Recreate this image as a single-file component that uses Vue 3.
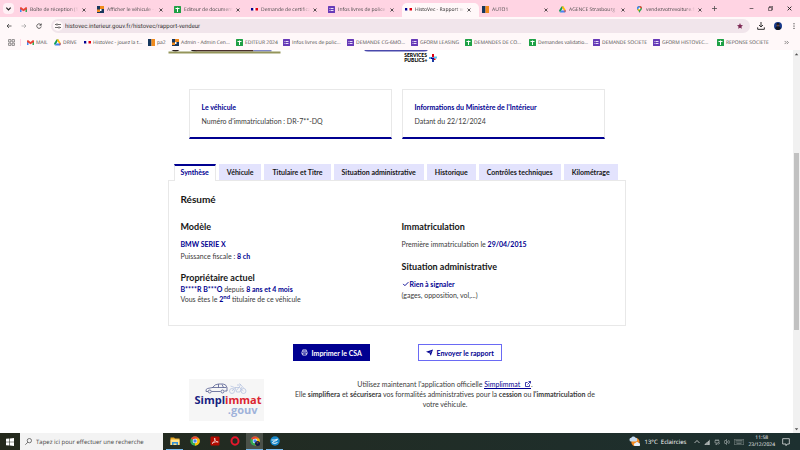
<template>
  <div class="screen">
    <!-- shared icons -->
    <svg class="defs" aria-hidden="true">
      <symbol id="i-gmail" viewBox="0 0 14 14">
        <path d="M0 3v9h3V6z" fill="#4285f4" />
        <path d="M14 3v9h-3V6z" fill="#34a853" />
        <path d="M0 3.500 2 2l5 4 5-4 2 1.500V6L7 10.500 0 6z" fill="#ea4335" />
      </symbol>
      <symbol id="i-drive" viewBox="0 0 14 14">
        <path d="M5 1h4L4.500 9 2 13 0 9z" fill="#0f9d58" />
        <path d="M5 1h4l5 8h-4z" fill="#ffba00" />
        <path d="M4.500 9H14l-2 4H2z" fill="#4285f4" />
        <path d="M10 9h4l-2 4z" fill="#ea4335" />
      </symbol>
      <symbol id="i-flag" viewBox="0 0 14 14">
        <path d="M0 4h5v5H0z" fill="#000091" />
        <path d="M5 4h4v5H5z" fill="#fff" />
        <path d="M9 4h5v5H9z" fill="#e1000f" />
      </symbol>
      <symbol id="i-auto" viewBox="0 0 14 14">
        <path d="M0 0h7v14H0z" fill="#17375e" />
        <path d="M7 0h7v14H7z" fill="#f08a1d" />
      </symbol>
      <symbol id="i-admin" viewBox="0 0 14 14">
        <path d="M0 0h14v14H0z" fill="#17375e" />
        <path d="M6 0h8v6H6zM0 7h6v5H0z" fill="#f08a1d" />
        <path d="M6 6h3v4H6z" fill="#fff" />
      </symbol>
      <symbol id="i-sheet" viewBox="0 0 14 14">
        <rect width="14" height="14" rx="1" fill="#1fa045" />
        <path d="M3 5h8M7 3v9" stroke="#fff" stroke-width="2" />
      </symbol>
      <symbol id="i-form" viewBox="0 0 14 14">
        <rect width="14" height="14" rx="1" fill="#673ab7" />
        <path d="M3 5h8M3 9h8" stroke="#e9e0f7" stroke-width="2" />
        <path d="M5 3v8" stroke="#673ab7" />
      </symbol>
      <symbol id="i-maps" viewBox="0 0 14 14">
        <path d="M7 14C6 9 2 8.500 2 5a5 5 0 0 1 10 0c0 3.500-4 4-5 9z" fill="#34a853" />
        <path d="M2 5a5 5 0 0 1 5-5l2 3-5 5z" fill="#4285f4" />
        <path d="M7 0a5 5 0 0 1 5 4L8 5z" fill="#ea4335" />
        <path d="M3 7.500 6 5l2 2-3 3z" fill="#fbbc04" />
        <circle cx="7" cy="5" r="1.800" fill="#fff" />
      </symbol>
      <symbol id="i-close" viewBox="0 0 8 8">
        <path d="m1 1 6 6M7 1 1 7" fill="none" stroke="currentColor" stroke-width="1.500" />
      </symbol>
      <symbol id="i-chrome" viewBox="0 0 20 20">
        <circle cx="10" cy="10" r="9.500" fill="#34a853" />
        <path d="M10 10 1.800 5.200a9.500 9.500 0 0 1 16.400 0z" fill="#ea4335" />
        <path d="M10 10V5h8.200A9.500 9.500 0 0 1 10 19.500z" fill="#fbbc04" />
        <circle cx="10" cy="10" r="4.600" fill="#fff" />
        <circle cx="10" cy="10" r="3.500" fill="#4285f4" />
      </symbol>
    </svg>

    <header class="browser">
      <div class="tab-strip">
        <button class="tab-search" aria-label="Rechercher dans les onglets">
          <svg viewBox="0 0 8 8"><path d="m1.500 3 2.500 2.500L6.500 3" fill="none" stroke="currentColor" stroke-width="1.400" /></svg>
        </button>
        <div v-for="tab in browserTabs" :key="tab.title" :class="['browser-tab', { active: tab.active }]">
          <svg class="favicon"><use :href="'#i-' + tab.icon" /></svg>
          <span class="tab-title">{{ tab.title }}</span>
          <button class="tab-close" aria-label="Fermer l'onglet"><svg><use href="#i-close" /></svg></button>
        </div>
        <button class="new-tab" aria-label="Nouvel onglet">
          <svg viewBox="0 0 8 8"><path d="M4 0v8M0 4h8" stroke="currentColor" stroke-width="1.200" /></svg>
        </button>
        <div class="window-controls">
          <button aria-label="Réduire"><svg viewBox="0 0 8 8"><path d="M1 4h6" stroke="currentColor" /></svg></button>
          <button aria-label="Restaurer">
            <svg viewBox="0 0 8 8"><path d="M1 2.500h5v5H1zM2.500 2.500v-2h5v5H6" fill="none" stroke="currentColor" /></svg>
          </button>
          <button aria-label="Fermer"><svg><use href="#i-close" /></svg></button>
        </div>
      </div>

      <div class="toolbar">
        <button aria-label="Précédent">
          <svg viewBox="0 0 12 12"><path d="M11 6H2M6 2 2 6l4 4" fill="none" stroke="currentColor" stroke-width="1.500" /></svg>
        </button>
        <button class="muted" aria-label="Suivant">
          <svg viewBox="0 0 12 12"><path d="M1 6h9M6 2l4 4-4 4" fill="none" stroke="currentColor" stroke-width="1.300" /></svg>
        </button>
        <button aria-label="Actualiser">
          <svg viewBox="0 0 12 12"><path d="M10 4a4.500 4.500 0 1 0 .5 3M10.500 1v3.500H7" fill="none" stroke="currentColor" stroke-width="1.500" /></svg>
        </button>
        <div class="address">
          <span class="site-info">
            <svg viewBox="0 0 12 12"><path d="M0 3h2M6 3h6M0 9h6M10 9h2" stroke="currentColor" stroke-width="1.400" /><circle cx="4" cy="3" r="1.500" fill="none" stroke="currentColor" stroke-width="1.300" /><circle cx="8" cy="9" r="1.500" fill="none" stroke="currentColor" stroke-width="1.300" /></svg>
          </span>
          <input v-model="url" type="text" aria-label="Adresse">
          <svg class="star" viewBox="0 0 12 12"><path d="m6 0 1.700 4 4.300.4-3.200 2.900 1 4.300L6 9.300l-3.800 2.300 1-4.300L0 4.400 4.300 4z" fill="#7d2a55" /></svg>
        </div>
        <button class="download" aria-label="Téléchargements">
          <svg viewBox="0 0 12 12"><path d="M6 0v7M3 4.500l3 3 3-3M1 8v3h10V8" fill="none" stroke="currentColor" stroke-width="1.500" /></svg>
        </button>
        <button class="profile" aria-label="Profil">
          <svg viewBox="0 0 12 12"><circle cx="6" cy="6" r="6" fill="#173a8c" /><path d="M2 10c0-3 2-3.500 4-3.500s4 .5 4 3.500c-2 2.500-6 2.500-8 0z" fill="#101522" /><circle cx="6" cy="4.500" r="2.200" fill="#6e4938" /><path d="M3.500 4c0-4 5-4 5 0z" fill="#15151c" /></svg>
        </button>
        <button class="menu" aria-label="Menu">
          <svg viewBox="0 0 12 12"><circle cx="6" cy="1.500" r="1.200" /><circle cx="6" cy="6" r="1.200" /><circle cx="6" cy="10.500" r="1.200" /></svg>
        </button>
      </div>

      <nav class="bookmarks" aria-label="Favoris">
        <button class="apps" aria-label="Applications">
          <svg viewBox="0 0 12 12"><path d="M1 1h4v4H1zM7 1h4v4H7zM1 7h4v4H1zM7 7h4v4H7z" fill="none" stroke="currentColor" /></svg>
        </button>
        <a v-for="mark in bookmarks" :key="mark.label" href="#" class="bookmark" :style="{ width: mark.width + 'px' }">
          <svg class="favicon"><use :href="'#i-' + mark.icon" /></svg>
          <span>{{ mark.label }}</span>
        </a>
        <button class="more" aria-label="Autres favoris">
          <svg viewBox="0 0 8 8"><path d="m1 1.500 2.500 2.500L1 6.500M4.500 1.500 7 4 4.500 6.500" fill="none" stroke="currentColor" /></svg>
        </button>
      </nav>
    </header>

    <div class="viewport">
      <main class="page">
        <div class="brand-row">
          <svg class="brand-left" viewBox="0 0 112 4">
            <path d="M3 0h8q-4 3-8 0zM22 0h8q-4 3-8 0z" fill="#2b2020" />
            <path d="M27 0h58v1.500H27z" fill="#4b302d" />
            <path d="M85 0h18v1.500H85z" fill="#7f86c4" />
            <path d="M0 1.500h112v2H0z" fill="#94955a" />
          </svg>
          <div class="brand-right">
            <svg class="brand-line" viewBox="0 0 64 2"><path d="M0 0q1 1.500 4 1.500h56q3 0 4-1.500z" fill="#4949ac" /></svg>
            <div class="services">
              <strong>SERVICES<br>PUBLICS+</strong>
              <svg viewBox="0 0 16 16"><path d="M6 0h4v6H6z" fill="#e1000f" /><path d="M0 6h6v4H0z" fill="#4a9fe8" /><path d="M4 7h6v3H4z" fill="#000091" /><path d="M10 5h6v4h-6z" fill="#56c9ef" /><path d="M6 10h4v6H6z" fill="#1b3ba5" /><path d="M10 9h3v3h-3z" fill="#e1000f" /></svg>
            </div>
          </div>
        </div>

        <section class="tiles">
          <article class="tile">
            <h2>Le véhicule</h2>
            <p>Numéro d'immatriculation : DR-7**-DQ</p>
          </article>
          <article class="tile">
            <h2>Informations du Ministère de l'Intérieur</h2>
            <p>Datant du 22/12/2024</p>
          </article>
        </section>

        <div class="report-tabs" role="tablist">
          <button
            v-for="name in reportTabs"
            :key="name"
            role="tab"
            :aria-selected="selected === name"
            :class="['report-tab', { selected: selected === name }]"
            @click="selected = name"
          >
            {{ name }}
          </button>
        </div>
        <section class="panel" role="tabpanel">
          <h2>Résumé</h2>
          <div class="columns">
            <div>
              <h3>Modèle</h3>
              <p><b>BMW SERIE X</b></p>
              <p>Puissance fiscale : <b>8 ch</b></p>
              <h3 class="owner">Propriétaire actuel</h3>
              <div class="compact">
                <p><b>B****R B***O</b> depuis <b>8 ans et 4 mois</b></p>
                <p>Vous êtes le <b>2<sup>nd</sup></b> titulaire de ce véhicule</p>
              </div>
            </div>
            <div>
              <h3>Immatriculation</h3>
              <p>Première immatriculation le <b>29/04/2015</b></p>
              <h3 class="status">Situation administrative</h3>
              <p class="check">
                <svg viewBox="0 0 12 12"><path d="m2 5 3 3L11 2" fill="none" stroke="currentColor" stroke-width="1.600" /></svg>
                <b>Rien à signaler</b>
              </p>
              <p class="detail">(gages, opposition, vol,...)</p>
            </div>
          </div>
        </section>

        <div class="actions">
          <div>
            <button class="btn primary">
              <svg viewBox="0 0 16 16"><path d="M4 5V2h8v3M4 12H2.500Q1 8 3 5h10q2 3 .5 7H12M4 9h8v5H4z" fill="none" stroke="currentColor" stroke-width="1.600" /></svg>
              Imprimer le CSA
            </button>
          </div>
          <div>
            <button class="btn">
              <svg viewBox="0 0 16 16"><path d="M0 6.500 16 1l-5 14.500-3-6z" fill="currentColor" /><path d="m8 9.500 4-4.500" stroke="#fff" /></svg>
              Envoyer le rapport
            </button>
          </div>
        </div>

        <section class="promo">
          <div class="promo-logo">
            <svg viewBox="0 0 84 22" fill="none">
              <g stroke="#555e91" stroke-width="1.600">
                <path d="M6 17H2q-1-5 3-6l10-2q5-7 12-7h9q6 0 8 7v7h-5M13 17h18M14 9h29M27 2v7M34 3l3 6" />
                <circle cx="9.500" cy="17" r="3" /><circle cx="35" cy="17" r="3" />
              </g>
              <g stroke="#b4c1df" stroke-width="1.500">
                <circle cx="54" cy="16" r="5" /><circle cx="77" cy="16" r="5" />
                <path d="M54 16l6-7h9l8 7M51 6l8 3M60 9l3 9h7l3-10M64 4h8l-3-3M63 15l7-9M71 3l7 8" />
              </g>
            </svg>
            <div class="wordmark"><span>Simpl</span><span class="red">immat</span></div>
            <div class="gouv">.gouv</div>
          </div>
          <p>
            Utilisez maintenant l'application officielle
            <a href="#">Simplimmat
              <svg viewBox="0 0 12 12"><path d="M5 3H1v8h8V7M7 1h4v4M11 1 5 7" fill="none" stroke="currentColor" stroke-width="1.500" /></svg></a>.<br>
            Elle <strong>simplifiera</strong> et <strong>sécurisera</strong> vos formalités administratives pour la
            <strong>cession</strong> ou <strong>l'immatriculation</strong> de votre véhicule.
          </p>
        </section>
      </main>
      <div class="scrollbar" aria-hidden="true">
        <svg viewBox="0 0 8 8"><path d="M2 5.500h4L4 3z" fill="#505050" /></svg>
        <div class="track"><div class="thumb"></div></div>
        <svg viewBox="0 0 8 8"><path d="M2 3h4L4 5.500z" fill="#505050" /></svg>
      </div>
    </div>

    <footer class="taskbar">
      <button class="start" aria-label="Démarrer">
        <svg viewBox="0 0 14 14"><path d="M0 1.500 6 1v5.500H0zM7 1l7-1v6.500H7zM0 7.500h6V13l-6-.5zM7 7.500h7V14l-7-1z" fill="#fff" /></svg>
      </button>
      <label class="search">
        <svg viewBox="0 0 12 12"><circle cx="7.500" cy="4.500" r="3.700" fill="none" stroke="#222" /><path d="M5 7.200.5 11.500" stroke="#222" /></svg>
        <input type="text" placeholder="Tapez ici pour effectuer une recherche" aria-label="Rechercher">
      </label>
      <button class="app running" aria-label="Explorateur de fichiers">
        <svg viewBox="0 0 20 20"><path d="M1 3h7l2 2h9v13H1z" fill="#e9a825" /><path d="M1 7h18v11H1z" fill="#fde08a" /><path d="M4 12h12v6h-3v-3H7v3H4z" fill="#2f8fd8" /></svg>
      </button>
      <button class="app" aria-label="Chrome"><svg><use href="#i-chrome" /></svg></button>
      <button class="app" aria-label="Acrobat">
        <svg viewBox="0 0 20 20"><rect x="1" y="1" width="18" height="18" rx="2" fill="#b30b00" /><path d="M4 15c5-3 7-8 5.500-11-2 2 2 8 7 8-3-1-9 0-12.500 3z" fill="none" stroke="#fff" stroke-width="1.300" /></svg>
      </button>
      <button class="app" aria-label="Opera">
        <svg viewBox="0 0 20 20"><ellipse cx="10" cy="10" rx="7" ry="7.500" fill="none" stroke="#e5172b" stroke-width="4" /></svg>
      </button>
      <button class="app running current" aria-label="Chrome, HistoVec">
        <svg viewBox="0 0 20 20"><use href="#i-chrome" /><circle cx="15" cy="15" r="5" fill="#111a40" /><circle cx="15" cy="13.500" r="1.800" fill="#6e4938" /></svg>
      </button>
      <button class="app running" aria-label="Messagerie">
        <svg viewBox="0 0 20 20"><circle cx="10" cy="10" r="9.500" fill="#1687c9" /><path d="M3 8q8 1 12-2-1 4-5 4t-5 4q5 2 10-1" fill="none" stroke="#fff" stroke-width="1.800" /></svg>
      </button>
      <div class="tray">
        <svg class="weather" viewBox="0 0 24 24"><circle cx="14" cy="13" r="9" fill="#f58a1f" /><path d="M5 12a4 4 0 0 1 0-8 5 5 0 0 1 9 0 4 4 0 0 1 0 8z" fill="#c5dbf1" /><path d="M14 22a3.500 3.500 0 0 1 0-7 4 4 0 0 1 7 0 3.500 3.500 0 0 1 0 7z" fill="#e6effa" /></svg>
        <span class="forecast">13°C&nbsp; Eclaircies</span>
        <svg class="chevron" viewBox="0 0 12 12"><path d="m1 8 5-5 5 5" fill="none" stroke="#fff" stroke-width="1.300" /></svg>
        <svg viewBox="0 0 12 12"><path d="M0 12 12 1v11z" fill="#8b9492" /><path d="M3 12V9M6 12V6M9 12V4" stroke="#d5d9d8" /></svg>
        <svg viewBox="0 0 12 12"><path d="M2 3h8v5H2zM4 3V0M8 3V0M6 8v3H3M9 7l2 2-2 2" fill="none" stroke="#ccd3d2" /></svg>
        <svg viewBox="0 0 12 12"><path d="M0 4h2l3-3v10L2 8H0zM7 4q2 2 0 4M9 2q4 4 0 8" fill="none" stroke="#ccd3d2" /></svg>
        <svg class="keyboard" viewBox="0 0 20 12"><path d="M.5.5h19v11H.5zM3 3h14M3 6h14M5 9h10" fill="none" stroke="#a6aead" /></svg>
        <time>11:58<br>23/12/2024</time>
        <svg class="notify" viewBox="0 0 12 12"><path d="M1 1h10v8H8l-2 2.500V9H1z" fill="none" stroke="#fff" /></svg>
      </div>
    </footer>
  </div>
</template>

<script setup>
import { ref } from 'vue';

const url = ref('histovec.interieur.gouv.fr/histovec/rapport-vendeur');

const browserTabs = [
  { icon: 'gmail', title: 'Boîte de réception (1)' },
  { icon: 'admin', title: 'Afficher le véhicule - A' },
  { icon: 'sheet', title: 'Editeur de documents' },
  { icon: 'flag', title: 'Demande de certificat' },
  { icon: 'form', title: 'Infos livres de police -' },
  { icon: 'flag', title: 'HistoVec - Rapport ve', active: true },
  { icon: 'auto', title: 'AUTO1' },
  { icon: 'drive', title: 'AGENCE Strasbourg -' },
  { icon: 'maps', title: 'vendezvotrevoiture.fr' }
];

// Width is the slot each bookmark takes in the bar
const bookmarks = [
  { icon: 'gmail', label: 'MAIL', width: 27 },
  { icon: 'drive', label: 'DRIVE', width: 30 },
  { icon: 'flag', label: 'HistoVec - jouez la t...', width: 64 },
  { icon: 'auto', label: 'pa2', width: 24 },
  { icon: 'admin', label: 'Admin - Admin Cen...', width: 64 },
  { icon: 'sheet', label: 'EDITEUR 2024', width: 47 },
  { icon: 'form', label: 'Infos livres de polic...', width: 64 },
  { icon: 'form', label: 'DEMANDE CG-6MO...', width: 64 },
  { icon: 'form', label: 'GFORM LEASING', width: 54 },
  { icon: 'sheet', label: 'DEMANDES DE CO...', width: 64 },
  { icon: 'sheet', label: 'Demandes validatio...', width: 64 },
  { icon: 'form', label: 'DEMANDE SOCIETE', width: 60 },
  { icon: 'form', label: 'GFORM HISTOVEC...', width: 64 },
  { icon: 'sheet', label: 'REPONSE SOCIETE', width: 60 }
];

const reportTabs = [
  'Synthèse',
  'Véhicule',
  'Titulaire et Titre',
  'Situation administrative',
  'Historique',
  'Contrôles techniques',
  'Kilométrage'
];
const selected = ref('Synthèse');
</script>

<style>
body {
  margin: 0;
}
</style>

<style scoped>
.screen {
  display: flex;
  flex-direction: column;
  height: 100vh;
  overflow: hidden;
  background: #fff;
  font-family: "Open Sans", sans-serif;
  font-size: 5px;
  line-height: 8px;
  text-rendering: geometricPrecision;
  color: #474747;
}
.screen * {
  box-sizing: border-box;
}
.defs {
  position: absolute;
  width: 0;
  height: 0;
}
button,
input {
  margin: 0;
  padding: 0;
  border: 0;
  background: none;
  font: inherit;
  color: inherit;
  text-rendering: inherit;
}
svg {
  display: block;
  flex: none;
}
h2,
h3,
p {
  margin: 0;
}

/* browser */
.tab-strip {
  display: flex;
  align-items: center;
  height: 17px;
  background: #ffd4e3;
}
.tab-search {
  width: 11px;
  height: 11px;
  margin: 0 3px;
  padding: 2px;
  border-radius: 4px;
  background: #fff0f5;
  color: #222;
}
.browser-tab {
  display: flex;
  align-items: center;
  flex: 0 1 77px;
  min-width: 0;
  height: 14px;
  margin-top: 2px;
  padding: 0 8px 0 3px;
  gap: 3px;
}
.browser-tab.active {
  border-radius: 5px 5px 0 0;
  background: #fff8f9;
  color: #222;
}
.favicon {
  width: 7px;
  height: 7px;
}
.tab-title {
  flex: 1;
  overflow: hidden;
  white-space: nowrap;
  mask-image: linear-gradient(to right, #000 80%, transparent);
}
.tab-close svg {
  width: 4px;
  height: 4px;
  color: #222;
}
.new-tab {
  width: 5px;
  margin-left: 2px;
}
.window-controls {
  display: flex;
  gap: 14px;
  margin-left: auto;
  margin-right: 8px;
  color: #222;
}
.window-controls svg {
  width: 5px;
  height: 5px;
}
.toolbar {
  display: flex;
  align-items: center;
  gap: 9px;
  height: 18px;
  padding: 0 6px;
  background: #fff8f9;
  color: #333;
}
.toolbar button {
  width: 6px;
}
.toolbar .muted {
  color: #999;
}
.toolbar .download,
.toolbar .profile {
  width: 8px;
}
.toolbar .menu {
  margin-right: -3px;
}
.address {
  display: flex;
  align-items: center;
  flex: 1;
  gap: 2px;
  height: 14px;
  margin: 0 -2px 0 0;
  padding: 0 7px 0 2px;
  border-radius: 7px;
  background: #f1e5eb;
}
.site-info {
  padding: 2px;
  border-radius: 50%;
  background: #fff8f9;
}
.site-info svg,
.star {
  width: 6px;
  height: 6px;
}
.address input {
  flex: 1;
  min-width: 0;
  height: 10px;
  font-family: Roboto, sans-serif;
  font-size: 6px;
}
.bookmarks {
  display: flex;
  align-items: center;
  height: 15px;
  padding: 0 11px 0 8px;
  background: #fff8f9;
}
.apps {
  flex: none;
  width: 13px;
  margin-right: 6px;
  border-right: 1px solid #ffd4e3;
}
.apps svg {
  width: 7px;
}
.bookmark {
  display: flex;
  align-items: center;
  flex: 0 1 auto;
  gap: 2px;
  min-width: 0;
  color: inherit;
  text-decoration: none;
  white-space: nowrap;
}
.more {
  width: 5px;
  margin-left: auto;
}

/* page */
.viewport {
  display: flex;
  flex: 1;
  min-height: 0;
}
.page {
  flex: 1;
  min-width: 0;
  font-family: Lato, sans-serif;
  font-size: 7px;
  line-height: 12px;
  text-rendering: auto;
  color: #3a3a3a;
}
.page > * {
  max-width: 458px;
  margin-left: auto;
  margin-right: auto;
}
.brand-row {
  display: flex;
  height: 39px;
}
.brand-left {
  width: 113px;
  height: 4px;
}
.brand-right {
  margin-left: 83px;
}
.brand-line {
  width: 64px;
  height: 2px;
}
.services {
  display: flex;
  align-items: center;
  justify-content: flex-end;
  gap: 1px;
  margin: 1px -9px 0 0;
  font-size: 5px;
  line-height: 5px;
  color: #000;
}
.services strong {
  font-weight: 900;
}
.services svg {
  width: 8px;
  height: 8px;
}
.tiles {
  display: grid;
  grid-template-columns: 1fr 1fr;
  gap: 10px;
  padding: 0 21px;
}
.tile {
  padding: 11px 12px 10px;
  border: 1px solid #e8e8e8;
  border-bottom: 2px solid #000091;
}
.tile h2 {
  margin-bottom: 2px;
  font-size: 7px;
  line-height: 12px;
  color: #000091;
}
.report-tabs {
  display: flex;
  gap: 3px;
  margin-top: 25px;
  padding: 0 6px;
}
.report-tab {
  height: 16px;
  padding: 0 8px;
  background: #e3e3fd;
  font-weight: 700;
  color: #161616;
  white-space: nowrap;
  cursor: pointer;
}
.report-tab.selected {
  height: 17px;
  margin-bottom: -1px;
  padding: 0 6px 3px;
  border: 1px solid #e8e8e8;
  border-top: 2px solid #000091;
  border-bottom: 0;
  background: #fff;
  color: #000091;
  z-index: 1;
}
.panel {
  padding: 12px 12px 21px;
  border: 1px solid #e8e8e8;
}
.panel h2 {
  margin-bottom: 16px;
  font-size: 10px;
  line-height: 12px;
  color: #161616;
}
.columns {
  display: grid;
  grid-template-columns: 1fr 1fr;
  gap: 10px;
}
.panel h3 {
  margin-bottom: 5px;
  font-size: 9px;
  line-height: 12px;
  color: #161616;
}
.panel h3.owner {
  margin: 10px 0 0;
}
.panel h3.status {
  margin-top: 11px;
}
.panel b {
  font-weight: 700;
  color: #000091;
}
.compact,
.detail {
  line-height: 10px;
}
sup {
  font-size: 6px;
  line-height: 0;
}
.check {
  display: flex;
  align-items: center;
  gap: 1px;
  color: #000091;
}
.check svg {
  width: 7px;
  height: 7px;
}
.actions {
  display: grid;
  grid-template-columns: 1fr 1fr;
  gap: 8px;
  margin-top: 18px;
  padding: 0 91px 0 125px;
}
.btn {
  display: flex;
  align-items: center;
  gap: 4px;
  height: 17px;
  padding: 0 7px;
  border: 1px solid #6a6af4;
  font-weight: 700;
  color: #000091;
  white-space: nowrap;
}
.btn.primary {
  border-color: #000091;
  background: #000091;
  color: #fff;
}
.btn svg {
  width: 7px;
  height: 7px;
}
.promo {
  display: flex;
  gap: 22px;
  margin-top: 18px;
  padding: 0 21px;
}
.promo-logo {
  flex: none;
  width: 75px;
  height: 42px;
  padding: 4px 6px;
  background: #f6f6f6;
  font-family: "Open Sans", sans-serif;
  font-size: 11px;
  line-height: 10px;
  font-weight: 700;
  color: #17227f;
}
.promo-logo svg {
  width: 42px;
  height: 11px;
  margin: 0 auto 1px;
}
.wordmark {
  text-align: center;
}
.red {
  color: #dc2430;
}
.gouv {
  text-align: right;
  color: #9fb2da;
}
.promo p {
  flex: 1;
  padding: 0 6px;
  line-height: 10px;
  text-align: center;
}
.promo a {
  border-bottom: 1px solid #000091;
  color: #000091;
  text-decoration: none;
}
.promo a svg {
  display: inline-block;
  width: 6px;
  height: 6px;
  margin-left: 3px;
}
.scrollbar {
  display: flex;
  flex-direction: column;
  width: 7px;
  background: #f1f1f1;
}
.scrollbar svg {
  width: 7px;
  height: 8px;
}
.track {
  flex: 1;
  padding-top: 95px;
}
.thumb {
  height: 65%;
  margin: 0 1px;
  background: #c1c1c1;
}

/* taskbar */
.taskbar {
  display: flex;
  height: 17px;
  background: linear-gradient(to right, #24291c, #1d3030);
  color: #fff;
}
.start {
  width: 20px;
}
.start svg {
  width: 8px;
  height: 8px;
  margin: auto;
}
.search {
  display: flex;
  align-items: center;
  gap: 4px;
  width: 143px;
  padding: 0 5px;
  background: #f3f3f3;
  font-size: 6px;
  color: #333;
}
.search svg {
  width: 7px;
  height: 7px;
}
.search input {
  flex: 1;
  min-width: 0;
}
.search input::placeholder {
  color: #444;
  opacity: 1;
}
.app {
  width: 17px;
  margin-left: 3px;
  border-bottom: 1px solid transparent;
}
.app.running {
  border-color: #76b9ed;
}
.app.current {
  background: #4b5149;
}
.app svg {
  width: 10px;
  height: 10px;
  margin: auto;
}
.tray {
  display: flex;
  align-items: center;
  gap: 4px;
  margin-left: auto;
  padding-right: 10px;
}
.tray svg {
  width: 6px;
  height: 6px;
}
.tray .weather {
  width: 11px;
  height: 11px;
}
.forecast {
  font-size: 6px;
}
.tray .chevron {
  margin-left: 4px;
}
.tray .keyboard {
  width: 10px;
}
.tray time {
  line-height: 7px;
  text-align: center;
}
.tray .notify {
  width: 8px;
  height: 8px;
  margin-left: 3px;
}
</style>
